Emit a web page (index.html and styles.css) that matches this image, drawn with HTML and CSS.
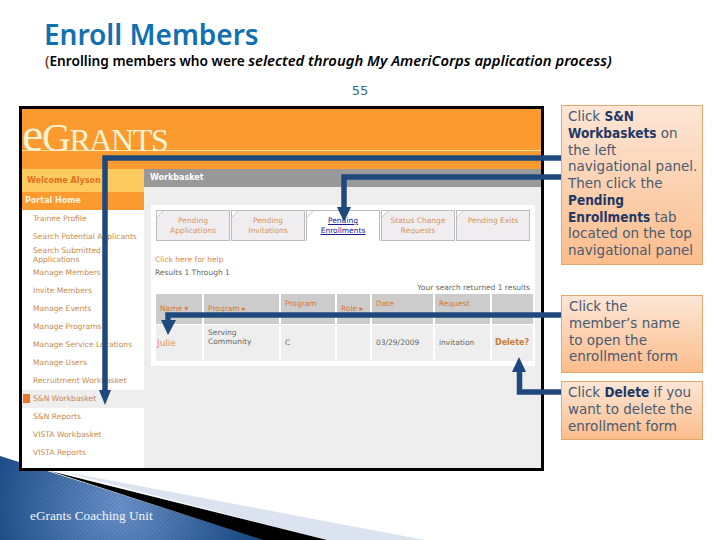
FILE: index.html
```html
<!DOCTYPE html>
<html lang="en">

<head>
  <meta charset="UTF-8">
  <title>Enroll Members</title>
  <link rel="stylesheet" href="styles.css">
</head>

<body>
  <div class="slide">
    <!-- corner swoosh of the slide template -->
    <svg class="swoosh" width="720" height="540" viewBox="0 0 720 540">
      <defs>
        <radialGradient id="swooshBlue" gradientUnits="userSpaceOnUse" cx="120" cy="505" r="130">
          <stop offset="0" stop-color="#6d93cb"></stop>
          <stop offset="1" stop-color="#1c4d86"></stop>
        </radialGradient>
        <pattern id="swooshHatch" width="3" height="3" patternUnits="userSpaceOnUse" patternTransform="rotate(45)">
          <rect width="1" height="3" fill="#12386a" fill-opacity="0.18"></rect>
        </pattern>
      </defs>
      <polygon points="60,471 425,540 327,540" fill="#dbe3f0"></polygon>
      <polygon points="0,456 265,540 0,540" fill="url(#swooshBlue)"></polygon>
      <polygon points="0,456 265,540 0,540" fill="url(#swooshHatch)"></polygon>
      <polygon points="50,471 327,540 263,540" fill="#000"></polygon>
    </svg>

    <div class="slide-head">
      <h1>Enroll Members</h1>
      <p class="subtitle"><span class="paren">(</span>Enrolling members who were <em>selected through My AmeriCorps application process)</em></p>
      <div class="page-no">55</div>
    </div>

    <div class="main">
      <div class="screen">
        <div class="eg-header">
          <div class="eg-logo"><span class="eg-e">e</span><span class="eg-g">G</span>RANTS</div>
        </div>
        <div class="eg-body">
          <div class="eg-nav">
            <div class="nav-welcome">Welcome Alyson</div>
            <div class="nav-home">Portal Home</div>
            <div class="nav-item">Trainee Profile</div>
            <div class="nav-item">Search Potential Applicants</div>
            <div class="nav-item nav-two">Search Submitted<br>Applications</div>
            <div class="nav-item">Manage Members</div>
            <div class="nav-item">Invite Members</div>
            <div class="nav-item">Manage Events</div>
            <div class="nav-item">Manage Programs</div>
            <div class="nav-item">Manage Service Locations</div>
            <div class="nav-item">Manage Users</div>
            <div class="nav-item">Recruitment Workbasket</div>
            <div class="nav-item nav-active"><span class="nav-mark"></span>S&amp;N Workbasket</div>
            <div class="nav-item">S&amp;N Reports</div>
            <div class="nav-item">VISTA Workbasket</div>
            <div class="nav-item">VISTA Reports</div>
          </div>
          <div class="eg-content">
            <div class="eg-bar">Workbasket</div>
            <div class="eg-panel">
              <div class="tabs">
                <div class="tab">Pending<br>Applications</div>
                <div class="tab">Pending<br>Invitations</div>
                <div class="tab tab-on"><u>Pending<br>Enrollments</u></div>
                <div class="tab">Status Change<br>Requests</div>
                <div class="tab">Pending Exits</div>
              </div>
              <div class="help">Click here for help</div>
              <div class="results">Results 1 Through 1</div>
              <div class="found">Your search returned 1 results</div>
              <div class="grid">
                <div class="th">Name ▾</div>
                <div class="th">Program ▸</div>
                <div class="th th-top">Program</div>
                <div class="th">Role ▸</div>
                <div class="th th-top">Date</div>
                <div class="th th-top">Request</div>
                <div class="th"></div>
                <div class="td td-name">Julie</div>
                <div class="td td-small">Serving<br>Community</div>
                <div class="td">C</div>
                <div class="td"></div>
                <div class="td">03/29/2009</div>
                <div class="td">invitation</div>
                <div class="td td-del">Delete?</div>
              </div>
            </div>
          </div>
        </div>
      </div>

      <div class="notes">
        <div class="note note-a">Click <b>S&amp;N</b><br><b>Workbaskets</b> on<br>the left<br>navigational panel.<br>Then click the<br><b>Pending</b><br><b>Enrollments</b> tab<br>located on the top<br>navigational panel</div>
        <div class="note note-b">Click the<br>member’s name<br>to open the<br>enrollment form</div>
        <div class="note note-c">Click <b>Delete</b> if you<br>want to delete the<br>enrollment form</div>
      </div>
    </div>

    <!-- leader arrows, they run over the screen picture -->
    <svg class="leaders" width="720" height="540" viewBox="0 0 720 540">
      <g fill="none" stroke="#1f497d" stroke-width="5.5">
        <path d="M561 158H105V392"></path>
        <path d="M561 177H344V210"></path>
        <path d="M561 315H168V323"></path>
        <path d="M561 392H519.500V370"></path>
      </g>
      <g fill="#1f497d">
        <polygon points="99,390 111,390 105,405"></polygon>
        <polygon points="337,207 351,207 344,222"></polygon>
        <polygon points="161,320 176,320 168,335"></polygon>
        <polygon points="512,372 526,372 519,357"></polygon>
      </g>
    </svg>

    <div class="footer">eGrants Coaching Unit</div>
  </div>
</body>

</html>
```

FILE: styles.css
```css
body {
  margin: 0;
  background: white;
  font-family: 'DejaVu Sans', sans-serif;
}

.slide {
  position: relative;
  width: 720px;
  height: 540px;
  overflow: hidden;
}

.swoosh,
.leaders {
  position: absolute;
  left: 0;
  top: 0;
}

.slide-head {
  position: relative;
  height: 106px;
  padding-left: 45px;
  box-sizing: border-box;
}

.slide-head h1 {
  margin: 0 0 0 -1px;
  padding-top: 14px;
  font: 600 28px/40px 'Noto Sans', sans-serif;
  color: #1170b0;
}

.subtitle {
  margin: 0;
  font: 600 13.700px/13px 'Noto Sans', sans-serif;
  color: black;
}

.subtitle em {
  font-size: 14.800px;
}

.subtitle .paren {
  color: #7a3a3a;
}

.page-no {
  margin: 16px 0 0 -45px;
  text-align: center;
  font-size: 13px;
  line-height: 16px;
  color: #2f6d8f;
}

.main {
  position: relative;
  display: flex;
  align-items: flex-start;
  padding-left: 19px;
}

/* the eGrants screen picture */
.screen {
  width: 525px;
  height: 365px;
  box-sizing: border-box;
  border: 3px solid black;
  background: #eee;
  flex: none;
}

.eg-header {
  height: 60px;
  box-sizing: border-box;
  background: #fb9a2f;
  padding-top: 11px;
}

.eg-logo {
  height: 30px;
  border-bottom: 1px solid #ffe59a;
  font: 32px/30px 'Liberation Serif', serif;
  letter-spacing: -1.400px;
  color: #fff3d6;
  white-space: nowrap;
}

.eg-e {
  font-size: 48px;
  line-height: 30px;
}

.eg-g {
  font-size: 40px;
  line-height: 30px;
}

.eg-body {
  display: flex;
  height: 299px;
}

.eg-nav {
  width: 122px;
  flex: none;
  background: white;
  font-size: 7.600px;
  color: #c98a4e;
}

.nav-welcome {
  height: 23px;
  padding-left: 5px;
  background: #fdca60;
  font-weight: bold;
  font-size: 8px;
  line-height: 23px;
  color: #e2701c;
}

.nav-home {
  height: 18px;
  padding-left: 3px;
  background: #fb9a2f;
  font-weight: bold;
  font-size: 8px;
  line-height: 18px;
  color: #fff3e0;
}

.nav-item {
  height: 18px;
  padding-left: 11px;
  line-height: 18px;
  white-space: nowrap;
}

.nav-two {
  line-height: 9px;
}

.nav-active {
  position: relative;
  background: #eee;
}

.nav-mark {
  position: absolute;
  left: 1px;
  top: 4px;
  width: 7px;
  height: 9px;
  background: #e8762a;
}

.eg-content {
  flex: 1;
}

.eg-bar {
  height: 18px;
  padding-left: 6px;
  background: #999;
  font-weight: bold;
  font-size: 8px;
  line-height: 18px;
  color: white;
}

.eg-panel {
  height: 161px;
  margin: 18px 6px 0 7px;
  padding: 5px 2px 0 5px;
  box-sizing: border-box;
  background: white;
  font-size: 7.500px;
}

.tabs {
  display: flex;
  gap: 1px;
  height: 31px;
}

.tab {
  position: relative;
  width: 74px;
  box-sizing: border-box;
  border: 1px solid #bbb;
  background: #efedf0;
  padding-top: 5px;
  text-align: center;
  line-height: 10px;
  color: #d9955a;
}

/* folded corner on each tab */
.tab::before {
  content: "";
  position: absolute;
  left: 0;
  top: 0;
  width: 6px;
  height: 6px;
  background: linear-gradient(135deg, white 45%, #c8c8c8 50%, transparent 58%);
}

.tab-on {
  background: white;
  border-bottom: none;
  color: #1a1a9a;
}

.help {
  margin: 14px 0 0 -1px;
  line-height: 10px;
  color: #d98a4b;
}

.results {
  margin: 3px 0 0 -1px;
  line-height: 10px;
  color: #666;
}

.found {
  margin-top: 5px;
  padding-right: 3px;
  text-align: right;
  line-height: 10px;
  color: #666;
}

.grid {
  display: grid;
  grid-template-columns: 46px 75px 54px 33px 61px 55px 41px;
  grid-template-rows: 30px 36px;
  gap: 1px 2px;
  margin-top: 1px;
}

.th {
  padding-left: 4px;
  background: #ccc;
  line-height: 30px;
  color: #d9782f;
  white-space: nowrap;
}

.th-top {
  line-height: 20px;
}

.td {
  padding-left: 4px;
  background: #eee;
  line-height: 36px;
  color: #666;
  white-space: nowrap;
}

.td-name {
  padding-left: 1px;
  font-size: 9px;
  color: #e8955a;
}

.td-small {
  padding-top: 3px;
  box-sizing: border-box;
  line-height: 9px;
}

.td-del {
  padding-left: 3px;
  font-weight: bold;
  font-size: 8px;
  color: #cc7a2e;
}

/* callouts on the right */
.notes {
  width: 142px;
  margin: -1px 0 0 17px;
  display: flex;
  flex-direction: column;
  gap: 8px;
  flex: none;
}

.note {
  box-sizing: border-box;
  padding: 2px 0 0 6px;
  border: 1px solid #e3a86f;
  background: linear-gradient(#fde6d6, #fbbd8c);
  font-size: 13.500px;
  line-height: 16.750px;
  color: #4a5a70;
  white-space: nowrap;
}

.note b {
  font-stretch: condensed;
  color: #1f3864;
}

.note-a {
  height: 160px;
  margin-bottom: 22px;
}

.note-b {
  height: 78px;
  padding-left: 7px;
}

.note-c {
  height: 59px;
}

.footer {
  position: absolute;
  left: 30px;
  top: 507px;
  font: 13.300px/17px 'Liberation Serif', serif;
  color: #f2f5fa;
}
```
